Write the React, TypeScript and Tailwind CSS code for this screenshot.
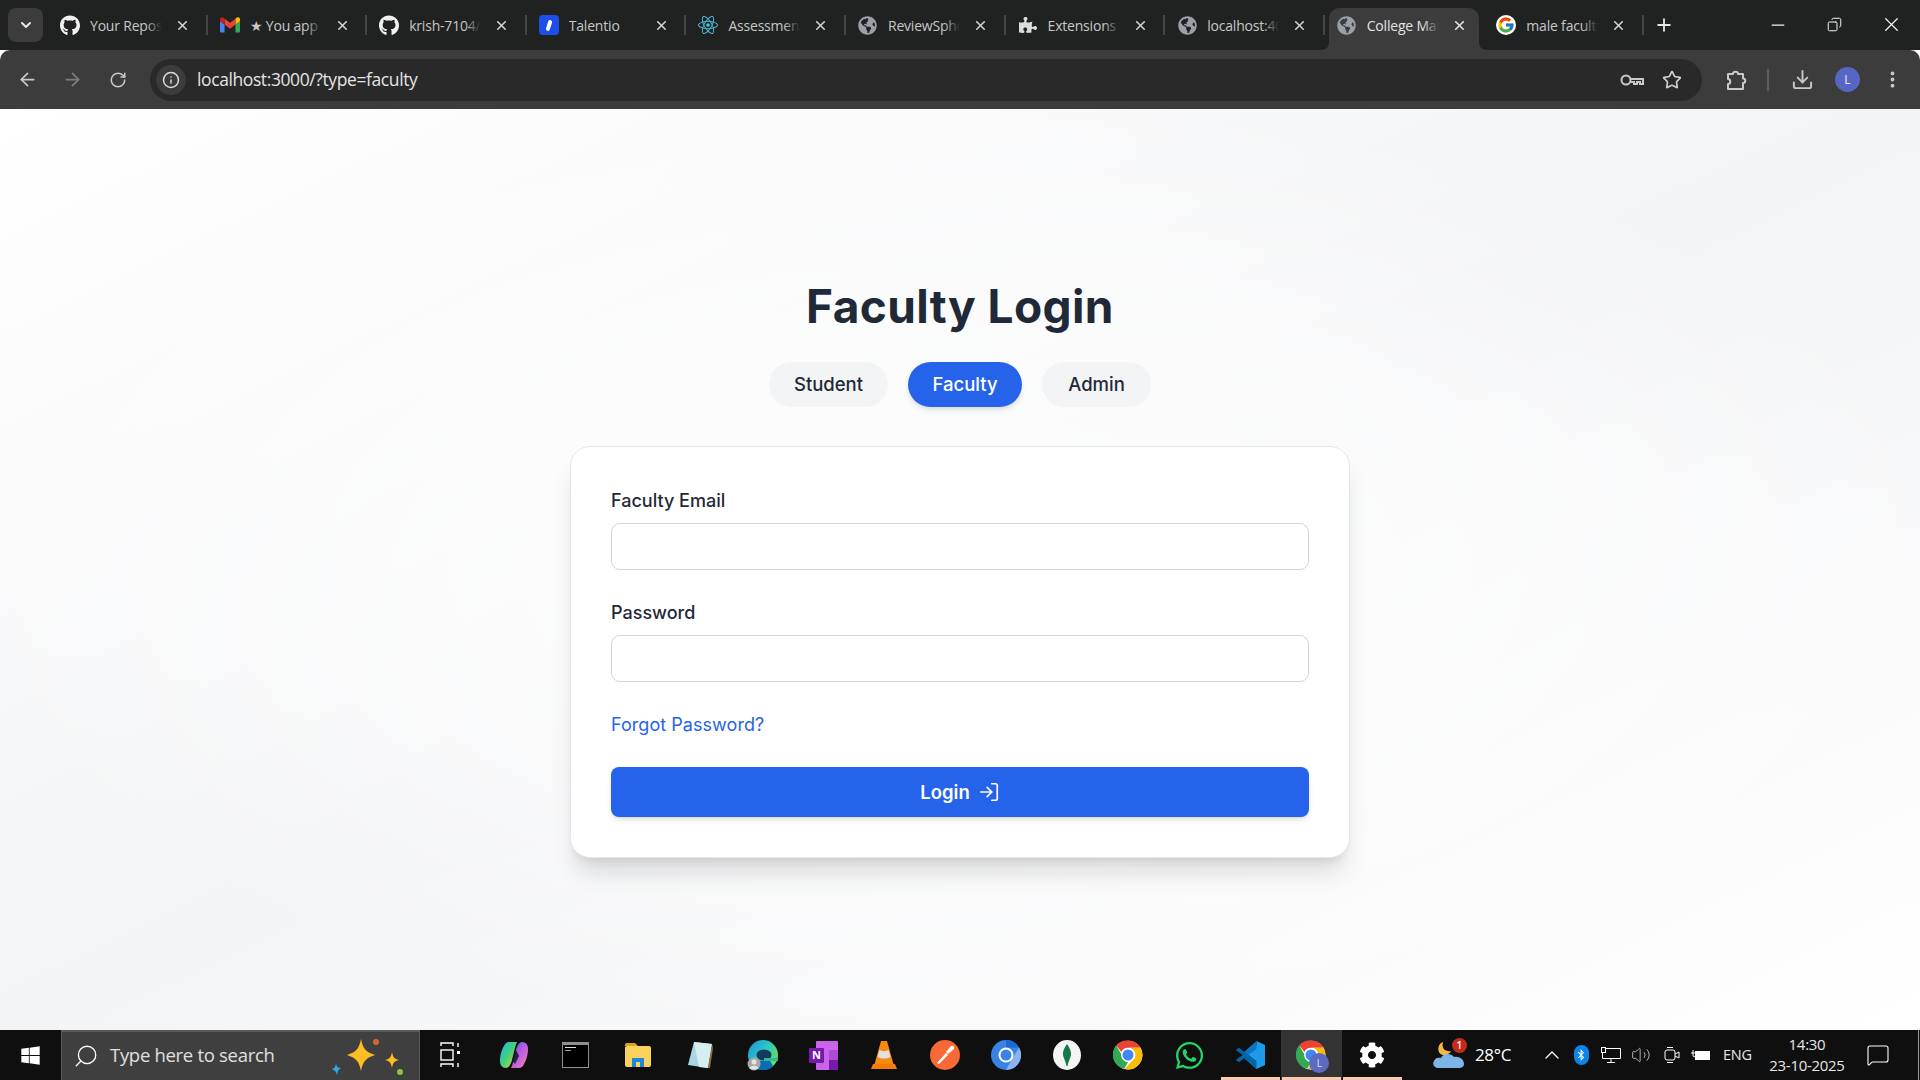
import React from "react";
import { ArrowLeft, ArrowRight, RotateCw, Info, Star, Download, EllipsisVertical, X, Plus, Minus, ChevronDown, LogIn, Search, ChevronUp, Volume2, MessageSquare, Copy } from "lucide-react";
import { FaGithub, FaGlobeAmericas, FaPuzzlePiece, FaWindows, FaWhatsapp, FaBluetoothB, FaCog } from "react-icons/fa";
import { FcGoogle } from "react-icons/fc";
import { SiReact } from "react-icons/si";

const seg = "font-['Open_Sans','Noto_Sans',sans-serif]";
const pop = "font-['Inter','Noto_Sans',sans-serif]";

function Gmail() {
  return (
    <svg width="20" height="16" viewBox="0 0 24 18">
      <path d="M1.6 18H5.5V8.5L0 4.4V16.4C0 17.3.7 18 1.6 18Z" fill="#4285f4" />
      <path d="M18.5 18H22.4C23.3 18 24 17.3 24 16.4V4.4L18.5 8.5Z" fill="#34a853" />
      <path d="M18.5 1.4V8.5L24 4.4V2C24 0 21.7-1.1 20.1.1Z" fill="#fbbc04" />
      <path d="M5.5 8.5V1.4L12 6.3 18.5 1.4V8.5L12 13.4Z" fill="#ea4335" />
      <path d="M0 2V4.4L5.5 8.5V1.4L3.9.1C2.3-1.1 0 0 0 2Z" fill="#c5221f" />
    </svg>
  );
}

function Talentio() {
  return (
    <div className="w-5 h-5 rounded-[4px] bg-[#1d4ee8] flex items-center justify-center">
      <div className="w-[4px] h-[11px] bg-white rounded-full rotate-[18deg]" />
    </div>
  );
}

const tabs = [
  { t: "Your Repos", i: <FaGithub size={21} color="#f1f1f1" /> },
  { t: "★ You app", i: <Gmail /> },
  { t: "krish-7104/", i: <FaGithub size={21} color="#f1f1f1" /> },
  { t: "Talentio", i: <Talentio /> },
  { t: "Assessment", i: <SiReact size={20} color="#4fc3dc" /> },
  { t: "ReviewSphere", i: <FaGlobeAmericas size={19} color="#9aa0a6" /> },
  { t: "Extensions", i: <FaPuzzlePiece size={18} color="#dcdcdc" /> },
  { t: "localhost:4000", i: <FaGlobeAmericas size={19} color="#9aa0a6" /> },
  { t: "College Manage", i: <FaGlobeAmericas size={19} color="#9aa0a6" />, active: true },
  { t: "male faculty", i: <FcGoogle size={20} className="bg-white rounded-full p-[1px]" /> },
];

function Tab({ t, i, active }: { t: string; i: React.ReactNode; active?: boolean }) {
  return (
    <div className="relative w-[159.6px] h-full flex items-center shrink-0">
      {active && (
        <div className="absolute left-[4px] right-[5px] top-[8px] bottom-0 bg-[#3c3c3c] rounded-t-[10px]">
          <svg className="absolute -left-[8px] bottom-0" width="8" height="8" viewBox="0 0 8 8"><path d="M8 0V8H0C5 8 8 5 8 0Z" fill="#3c3c3c" /></svg>
          <svg className="absolute -right-[8px] bottom-0" width="8" height="8" viewBox="0 0 8 8"><path d="M0 0V8H8C3 8 0 5 0 0Z" fill="#3c3c3c" /></svg>
        </div>
      )}
      <div className="relative flex items-center w-full h-full">
        <div className="w-5 h-5 ml-[12px] flex items-center justify-center shrink-0">{i}</div>
        <div className={`relative ml-[10px] w-[72px] overflow-hidden whitespace-nowrap text-[14px] ${seg} tracking-[-0.2px] ${active ? "text-[#e4e4e4]" : "text-[#c7c7c7]"}`}>
          {t}
          <div className={`absolute right-0 top-0 bottom-0 w-4 bg-linear-to-r from-transparent ${active ? "to-[#3c3c3c]" : "to-[#202221]"}`} />
        </div>
        <X size={15} strokeWidth={2.6} className={`ml-[13px] shrink-0 ${active ? "text-[#e4e4e4]" : "text-[#d0d0d0]"}`} />
      </div>
      {!active && <div className="absolute right-0 top-[15px] h-[20px] w-[2px] bg-[#444645]" />}
    </div>
  );
}

function ChromeIcon({ size = 30 }: { size?: number }) {
  return (
    <svg width={size} height={size} viewBox="0 0 48 48">
      <circle cx="24" cy="24" r="23" fill="#fff" />
      <path d="M24 1A23 23 0 0 1 44 12.5H24A11.5 11.5 0 0 0 13.5 19L5 8.5A23 23 0 0 1 24 1Z" fill="#ea4335" />
      <path d="M5 8.5 14 24A11.5 11.5 0 0 0 24 35.5L18 46A23 23 0 0 1 5 8.5Z" fill="#34a853" />
      <path d="M44 12.5A23 23 0 0 1 24 47L18.5 46 34 30A11.5 11.5 0 0 0 34 18 11.5 11.5 0 0 0 24 12.5Z" fill="#fbbc04" />
      <circle cx="24" cy="24" r="11" fill="#fff" />
      <circle cx="24" cy="24" r="8.8" fill="#4285f4" />
    </svg>
  );
}

const taskIcons: { key: string; node: React.ReactNode; w: string; active?: boolean; line?: boolean }[] = [
  { key: "view", w: "w-[62.4px]", node: (
    <svg width="20" height="26" viewBox="0 0 20 26" fill="none" stroke="#fff" strokeWidth="1.4" className="-ml-[2px]">
      <path d="M1 4V1H13V4" /><rect x="1" y="8" width="12" height="10" /><path d="M1 25V22H13V25" /><path d="M18 1V5M18 21V25" /><rect x="17" y="9" width="3" height="3" fill="#fff" stroke="none" />
    </svg>
  )},
  { key: "copilot", w: "w-[62.4px]", node: (
    <svg width="30" height="30" viewBox="0 0 30 30">
      <defs>
        <linearGradient id="cp1" x1="0" y1="0" x2="1" y2="1"><stop offset="0" stopColor="#19b4e8" /><stop offset=".5" stopColor="#43d17a" /><stop offset="1" stopColor="#f6d23a" /></linearGradient>
        <linearGradient id="cp2" x1="0" y1="0" x2="1" y2="1"><stop offset="0" stopColor="#3a63e8" /><stop offset=".5" stopColor="#c05ae0" /><stop offset="1" stopColor="#f08ab0" /></linearGradient>
      </defs>
      <path d="M10 2H18C16 6 15 12 13 20 12 24 10 28 7 28 3 28 1 25 1 21 1 15 3 9 5 6 6 3.500 8 2 10 2Z" fill="url(#cp1)" />
      <path d="M20 28H12C14 24 15 18 17 10 18 6 20 2 23 2 27 2 29 5 29 9 29 15 27 21 25 24 24 26.500 22 28 20 28Z" fill="url(#cp2)" />
      <path d="M13 20 17 10 20 16 16 24Z" fill="#111827" opacity=".85" />
    </svg>
  )},
  { key: "term", w: "w-[62.4px]", node: (
    <div className="w-[27px] h-[26px] bg-black border border-[#8f8f8f] border-t-[3px] flex flex-col items-start pl-[2px] pt-[2px] gap-[2px]">
      <div className="w-[11px] h-[1px] bg-[#ddd]" />
      <div className="w-[6px] h-[1px] bg-[#999]" />
    </div>
  )},
  { key: "files", w: "w-[62.4px]", node: (
    <svg width="28" height="26" viewBox="0 0 28 26">
      <path d="M1 3C1 1.5 2 1 3 1H11L14 4H1Z" fill="#e0a21c" />
      <rect x="1" y="4" width="26" height="21" rx="2" fill="#fbd25c" />
      <path d="M8 25V16H20V25H16V20H12V25Z" fill="#1c88e0" />
    </svg>
  )},
  { key: "note", w: "w-[62.4px]", node: (
    <svg width="26" height="28" viewBox="0 0 26 28" className="-ml-[2px]">
      <path d="M7 1 25 3 21 27 1 24Z" fill="#a9d6e4" />
      <path d="M7 1 25 3 21 27 12 26Z" fill="#d6edf2" />
      <path d="M21 27 25 3 26 7 23 27Z" fill="#8a7148" />
    </svg>
  )},
  { key: "edge", w: "w-[61px]", node: (
    <svg width="32" height="32" viewBox="0 0 32 32">
      <defs>
        <linearGradient id="ed1" x1="0" y1="0" x2="1" y2=".7"><stop offset="0" stopColor="#1a8fe0" /><stop offset=".55" stopColor="#2fc9c0" /><stop offset="1" stopColor="#6ee04f" /></linearGradient>
      </defs>
      <circle cx="17" cy="16" r="15" fill="url(#ed1)" />
      <path d="M4 23C6 29 12 31.500 17 31 21 31 25 30 27 27L24 22H15C11 22 6 21 4 23Z" fill="#0b6cb5" />
      <ellipse cx="18" cy="16" rx="7.500" ry="5.500" fill="#123a5e" />
      <path d="M18 19H32V22H18Z" fill="#2fb7a0" />
      <circle cx="8" cy="25" r="6.500" fill="#a8a8a8" /><circle cx="8" cy="23" r="2.500" fill="#e5e5e5" /><path d="M3.500 29C5 26 11 26 12.500 29 10 31 6 31 3.500 29Z" fill="#e5e5e5" />
    </svg>
  )},
  { key: "one", w: "w-[61px]", node: (
    <div className="relative w-[29px] h-[29px]">
      <div className="absolute right-0 top-0 w-[22px] h-[29px] bg-[#ca64ea] rounded-[1px]">
        <div className="absolute right-0 top-[9px] w-[9px] h-[10px] bg-[#ae4bd5]" />
        <div className="absolute right-0 top-[19px] w-[9px] h-[10px] bg-[#7719aa]" />
      </div>
      <div className={`absolute left-0 top-[7px] w-[15px] h-[15px] bg-[#7719aa] rounded-[1px] flex items-center justify-center text-white text-[11px] font-bold ${seg}`}>N</div>
    </div>
  )},
  { key: "vlc", w: "w-[61px]", node: (
    <svg width="26" height="30" viewBox="0 0 26 30">
      <path d="M10 1H16L23 26H3Z" fill="#f48b0e" />
      <path d="M8.500 10C11 11.500 15 11.500 17.500 10L19.500 17C16 19 10 19 6.500 17Z" fill="#e2e2e2" />
      <path d="M2 24H24L26 29H0Z" fill="#f47b0a" />
    </svg>
  )},
  { key: "post", w: "w-[61px]", node: (
    <svg width="30" height="30" viewBox="0 0 30 30">
      <circle cx="15" cy="15" r="15" fill="#f76935" />
      <path d="M7 23 16 13 18 15 9 24Z" fill="#fff" />
      <path d="M16 12 21 6C23 5 25 7 24 9L18 14Z" fill="#fff" />
    </svg>
  )},
  { key: "chromium", w: "w-[61px]", node: (
    <svg width="30" height="30" viewBox="0 0 30 30">
      <circle cx="15" cy="15" r="15" fill="#3a83e6" />
      <path d="M15 0A15 15 0 0 1 28 7.500H15Z" fill="#1b6ad4" />
      <path d="M28 7.500A15 15 0 0 1 15 30L21 19Z" fill="#8ab4f0" />
      <circle cx="15" cy="15" r="7.500" fill="#fff" /><circle cx="15" cy="15" r="5.500" fill="#3a83e6" />
    </svg>
  )},
  { key: "mongo", w: "w-[61px]", node: (
    <svg width="28" height="30" viewBox="0 0 28 30">
      <ellipse cx="14" cy="15" rx="14" ry="15" fill="#f4f4f4" />
      <path d="M14 4C17 8 18.500 12 18 15 17.500 18 15.500 21 14.500 26H13.500C12.500 21 10.500 18 10 15 9.500 12 11 8 14 4Z" fill="#13794b" />
    </svg>
  )},
  { key: "chrome", w: "w-[61px]", node: <ChromeIcon /> },
  { key: "wa", w: "w-[61px]", node: <FaWhatsapp size={31} color="#25d366" /> },
  { key: "code", w: "w-[61px]", line: true, node: (
    <svg width="30" height="30" viewBox="0 0 30 30">
      <path d="M21.500 1 30 5V25L21.500 29 7 16 21.500 5Z" fill="#1e9be8" />
      <path d="M21.500 1V9L9 18 4 22 1 20 8 15 1 10 4 8 9 12Z" fill="#0b76c6" />
      <path d="M1 20 4 22 9 18 21.500 29V21L14 15 9 12 4 8 1 10 8 15Z" fill="#0065a9" />
    </svg>
  )},
  { key: "chrome2", w: "w-[61px]", active: true, line: true, node: (
    <div className="relative w-[30px] h-[30px]">
      <ChromeIcon />
      <div className={`absolute -right-[3px] -bottom-[3px] w-[20px] h-[20px] rounded-full bg-[#5c6bc0] flex items-center justify-center text-[10px] text-[#dfe3f5] ${seg}`}>L</div>
    </div>
  )},
  { key: "set", w: "w-[61px]", line: true, node: <FaCog size={26} color="#fff" /> },
];

function Field({ label, type }: { label: string; type: string }) {
  return (
    <div className="flex flex-col mb-[29px]">
      <label className="h-[26px] mb-[10px] flex items-center text-[18px] font-medium text-[#1f2937]">{label}</label>
      <input type={type} className="h-[47px] w-full rounded-[9px] border border-[#d1d5db] bg-white" />
    </div>
  );
}

export default function App() {
  return (
    <div className="w-full h-screen flex flex-col overflow-hidden bg-white">
      <div className="h-[50px] shrink-0 bg-[#202221] flex items-stretch">
        <div className="w-[48px] shrink-0 flex items-start pl-[8px] pt-[8px]">
          <div className="w-[35px] h-[34px] rounded-lg bg-[#3c3c3c] flex items-center justify-center">
            <ChevronDown size={16} strokeWidth={3} className="text-[#e6e6e6]" />
          </div>
        </div>
        {tabs.map((x, idx) => <Tab key={idx} {...x} />)}
        <div className="flex items-center pb-[1px] ml-[10px]">
          <Plus size={20} strokeWidth={2.2} className="text-[#e6e6e6]" />
        </div>
        <div className="flex-1" />
        <div className="flex items-center pb-[1px] text-[#f2f2f2]">
          <div className="w-[57px] flex justify-center"><Minus size={20} strokeWidth={1.5} /></div>
          <div className="w-[57px] flex justify-center"><Copy size={15} strokeWidth={1.6} className="-scale-x-100" /></div>
          <div className="w-[57px] flex justify-center"><X size={23} strokeWidth={1.3} /></div>
        </div>
      </div>

      <div className="h-[59px] shrink-0 bg-[#3c3c3c] rounded-t-[10px] flex items-center">
        <div className="w-[150px] shrink-0 flex items-center text-[#c9c9c9]">
          <ArrowLeft size={21} strokeWidth={2} className="ml-[17px]" />
          <ArrowRight size={21} strokeWidth={2} className="ml-[24px] text-[#7e7e7e]" />
          <RotateCw size={18} strokeWidth={2} className="ml-[26px]" />
        </div>
        <div className="h-[42px] w-[1552px] shrink-0 rounded-full bg-[#292929] flex items-center">
          <div className="ml-[6px] w-[30px] h-[30px] rounded-full bg-[#3c3c3c] flex items-center justify-center">
            <Info size={18} strokeWidth={2} className="text-[#dcdcdc]" />
          </div>
          <span className={`ml-[11px] text-[17.5px] tracking-[-0.4px] text-[#e4e4e4] ${seg}`}>localhost:3000/?type=faculty</span>
          <div className="flex-1" />
          <svg width="24" height="14" viewBox="0 0 24 14" fill="none" stroke="#c9c9c9" strokeWidth="2" className="mr-[18px]">
            <circle cx="6" cy="7" r="4.500" /><path d="M10.500 6H23V11H20V9H17V11H14V9H10.500" />
          </svg>
          <Star size={20} strokeWidth={2} className="text-[#d0d0d0] mr-[20px]" />
        </div>
        <div className="flex-1 flex items-center text-[#c9c9c9] pl-[23px]">
          <svg width="22" height="22" viewBox="0 0 22 22" fill="none" stroke="#c9c9c9" strokeWidth="2" strokeLinejoin="round">
            <path d="M3 5H8C8 2 13 2 13 5H18V9.500C21 9.500 21 14 18 14V20H3V15C6 15 6 10 3 10Z" />
          </svg>
          <div className="w-[2px] h-[22px] bg-[#5d5d5d] ml-[20px]" />
          <Download size={23} strokeWidth={2} className="ml-[22px]" />
          <div className={`ml-[21px] w-[25px] h-[25px] rounded-full bg-[#5766c4] flex items-center justify-center text-[12px] text-[#e3e6f7] ${seg}`}>L</div>
          <EllipsisVertical size={21} strokeWidth={2.4} className="ml-[22px]" />
        </div>
      </div>

      <main className={`flex-1 flex flex-col items-center bg-[radial-gradient(ellipse_at_center,rgba(255,255,255,0.75)_0%,rgba(255,255,255,0.6)_35%,rgba(255,255,255,0)_75%),linear-gradient(to_bottom_right,#ffffff,#f3f4f6,#ffffff)] pt-[164px] ${pop}`}>
        <h1 className="h-[66px] flex items-center text-[46px] font-bold text-[#1f2937] tracking-[0.4px]">Faculty Login</h1>
        <div className="flex gap-5 mt-[23px] mb-[39px]">
          <button className="w-[119px] h-[45px] rounded-full bg-[#f3f4f6] text-[18.5px] font-medium text-[#1f2937]">Student</button>
          <button className="w-[114px] h-[45px] rounded-full bg-[#2563eb] text-[18.5px] font-medium text-white shadow-md">Faculty</button>
          <button className="w-[109px] h-[45px] rounded-full bg-[#f3f4f6] text-[18.5px] font-medium text-[#1f2937]">Admin</button>
        </div>
        <div className="w-[780px] bg-white border border-[#e5e7eb] rounded-[20px] shadow-[0_20px_25px_-5px_rgba(0,0,0,0.12),0_8px_10px_-6px_rgba(0,0,0,0.1)] px-[40px] pt-[40px] pb-[40px] flex flex-col">
          <Field label="Faculty Email" type="email" />
          <Field label="Password" type="password" />
          <a className="h-[26px] mb-[30px] flex items-center text-[18px] tracking-[0.05px] text-[#2563eb]">Forgot Password?</a>
          <button className="h-[50px] rounded-lg bg-[#2563eb] text-white text-[18.5px] font-semibold shadow-md flex items-center justify-center gap-[8px]">
            <span className="pt-[1px]">Login</span> <LogIn size={22} strokeWidth={1.8} />
          </button>
        </div>
      </main>

      <div className="h-[50px] shrink-0 bg-[#0f0f0f] flex items-stretch">
        <div className="w-[61px] flex items-center justify-center shrink-0">
          <FaWindows size={21} color="#fff" />
        </div>
        <div className="w-[359px] shrink-0 bg-[#3f3f3f] border-t-2 border-x border-[#5a5a5a] flex items-center relative">
          <Search size={26} strokeWidth={1.2} className="text-white ml-[11px] -scale-x-100" />
          <span className={`ml-[11px] pb-[2px] text-[18.5px] text-[#e0e0e0] tracking-[-0.3px] ${seg}`}>Type here to search</span>
          <div className="flex-1" />
          <svg width="78" height="42" viewBox="0 0 78 42" className="mr-[10px]">
            <path d="M30 4C32 14 35 17 44 20 35 23 32 26 30 36 28 26 25 23 16 20 25 17 28 14 30 4Z" fill="#fbbf24" />
            <path d="M61 17C62 22 63 24 68 25 63 26 62 28 61 33 60 28 59 26 54 25 59 24 60 22 61 17Z" fill="#fbbf24" />
            <path d="M5 29C6 32 7 33 10 33 7 35 7 36 6 40 5 36 4 36 1 34 4 33 4 32 5 29Z" fill="#2ea8e8" />
            <circle cx="45" cy="7" r="3" fill="#d9622b" />
            <circle cx="69" cy="37" r="3" fill="#8cc63f" />
          </svg>
        </div>
        {taskIcons.map((x) => (
          <div key={x.key} className={`relative ${x.w} shrink-0 flex items-center justify-center ${x.active ? "bg-[#333333]" : ""}`}>
            {x.node}
            {x.line && <div className="absolute left-[1px] right-[1px] bottom-0 h-[3px] bg-[#fcc9b0]" />}
          </div>
        ))}
        <div className="flex-1 flex items-center text-white relative">
          <div className="relative ml-[30px] w-[32px] h-[30px]">
            <svg width="32" height="30" viewBox="0 0 32 30">
              <path d="M7 4C4 8 5 14 10 15 14 16 17 13 18 11 13 12 8 9 10 2 9 2 8 3 7 4Z" fill="#f5b942" />
              <path d="M6 28C1 28-1 24 1 21 2 18 5 17 8 18 10 13 18 13 21 17 26 16 31 19 31 24 31 27 28 28 26 28Z" fill="#7db4e8" />
            </svg>
            <div className={`absolute right-[-2px] top-[-2px] w-[15px] h-[15px] rounded-full bg-[#c42b1c] text-[10px] font-semibold flex items-center justify-center ${seg}`}>1</div>
          </div>
          <span className={`ml-[10px] w-[38px] whitespace-nowrap text-[17px] tracking-[-0.3px] ${seg}`}>28°C</span>
          <ChevronUp size={24} strokeWidth={1.3} className="ml-[27px]" />
          <div className="ml-[10px] w-[15px] h-[20px] rounded-full bg-[#0a84e8] flex items-center justify-center"><FaBluetoothB size={12} color="#fff" /></div>
          <svg width="20" height="17" viewBox="0 0 20 17" fill="none" stroke="#fff" strokeWidth="1" className="ml-[12px]">
            <path d="M4 1.500H19.500V11.500H1.500V6" /><rect x=".5" y=".5" width="4" height="5" /><path d="M10 11.500V15.500M6 15.500H14" />
          </svg>
          <Volume2 size={20} strokeWidth={1} className="ml-[10px] text-[#d0d0d0]" />
          <svg width="16" height="18" viewBox="0 0 16 18" fill="none" stroke="#fff" strokeWidth="1" className="ml-[13px]">
            <rect x="1" y="4" width="10" height="10" rx="2" /><path d="M11 8 15 6V12L11 10M3 1.500H9M3 16.500H9" />
          </svg>
          <svg width="20" height="12" viewBox="0 0 20 12" fill="none" stroke="#fff" strokeWidth="1" className="ml-[11px]">
            <rect x="4.500" y="2.500" width="14" height="8" fill="#fff" /><path d="M0 4H4M2 1V4M2 4V7L4 8" />
          </svg>
          <span className={`ml-[12px] w-[31px] whitespace-nowrap text-[14.5px] tracking-[-0.2px] text-[#e6e6e6] ${seg}`}>ENG</span>
          <div className={`ml-[15px] w-[76px] flex flex-col items-center leading-[21px] text-[15px] text-[#e6e6e6] tracking-[-0.3px] whitespace-nowrap ${seg}`}>
            <span>14:30</span>
            <span>23-10-2025</span>
          </div>
          <MessageSquare size={24} strokeWidth={1.1} className="ml-[21px]" />
          <div className="absolute right-[1px] top-[0px] bottom-0 w-[1px] bg-[#9a9a9a]" />
        </div>
      </div>
    </div>
  );
}
